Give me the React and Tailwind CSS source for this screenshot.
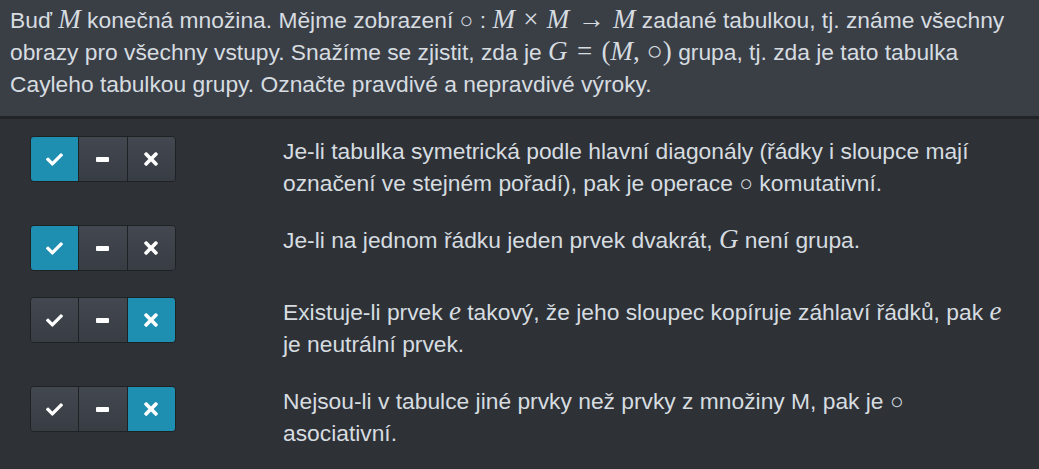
import React, { useState } from 'react';
import { FaCheck, FaTimes } from 'react-icons/fa';

const M = ({ children }) => (
  <span className="italic text-[27px] leading-none" style={{ fontFamily: '"Liberation Serif", "DejaVu Serif", serif' }}>
    {children}
  </span>
);

const R = ({ children, className = '' }) => (
  <span className={'text-[27px] leading-none ' + className} style={{ fontFamily: '"Liberation Serif", "DejaVu Serif", serif' }}>
    {children}
  </span>
);

const statements = [
  {
    answer: 'yes',
    text: (
      <>Je-li tabulka symetrická podle hlavní diagonály (řádky i sloupce mají označení ve stejném pořadí), pak je operace ○ komutativní.</>
    ),
  },
  {
    answer: 'yes',
    text: (
      <>Je-li na jednom řádku jeden prvek dvakrát, <M>G</M> není grupa.</>
    ),
  },
  {
    answer: 'no',
    text: (
      <>Existuje-li prvek <M>e</M> takový, že jeho sloupec kopíruje záhlaví řádků, pak <M>e</M> je neutrální prvek.</>
    ),
  },
  {
    answer: 'no',
    text: <>Nejsou-li v tabulce jiné prvky než prvky z množiny M, pak je ○ asociativní.</>,
  },
];

const Toggle = ({ value, onChange }) => {
  const options = [
    { key: 'yes', icon: <FaCheck size={17} /> },
    { key: 'skip', icon: <span className="block h-[5px] w-[13px] rounded-[1px] bg-white" /> },
    { key: 'no', icon: <FaTimes size={20} /> },
  ];
  return (
    <div className="flex h-[46px] w-[146px] shrink-0 overflow-hidden rounded-[4px] border border-[#1f2225]">
      {options.map((o, i) => (
        <button
          key={o.key}
          onClick={() => onChange(o.key)}
          className={
            'flex flex-1 items-center justify-center text-white ' +
            (i > 0 ? 'border-l border-[#1f2225] ' : '') +
            (value === o.key ? 'bg-[#1f8fb1]' : 'bg-gradient-to-b from-[#43474f] to-[#383c43]')
          }
        >
          {o.icon}
        </button>
      ))}
    </div>
  );
};

export default function App() {
  const [answers, setAnswers] = useState(statements.map((s) => s.answer));

  return (
    <div
      className="min-h-[469px] w-full bg-[#2e3236] text-[22.8px] leading-[32px] text-[#d6dce0]"
      style={{ fontFamily: '"Liberation Sans", Arial, sans-serif' }}
    >
      <div className="border-b-[3px] border-[#222528] bg-[#3a3f46] px-[10px] pt-[4px] pb-[16px]">
        Buď <M>M</M> konečná množina. Mějme zobrazení ○ : <M>M</M> <R className="mx-[2px]">×</R> <M>M</M>{' '}
        <R className="mx-[2px]">→</R> <M>M</M> zadané tabulkou, tj. známe všechny obrazy pro všechny vstupy. Snažíme
        se zjistit, zda je <M>G</M> <R className="mx-[3px]">=</R> <R>(</R><M>M</M><R>, ○)</R> grupa, tj. zda je tato
        tabulka Cayleho tabulkou grupy. Označte pravdivé a nepravdivé výroky.
      </div>

      <div className="flex flex-col gap-[26px] pt-[17px] pb-[20px]">
        {statements.map((s, i) => (
          <div key={i} className="flex items-start">
            <div className="w-[283px] shrink-0 pl-[30px]">
              <Toggle
                value={answers[i]}
                onChange={(v) => setAnswers((prev) => prev.map((a, j) => (j === i ? v : a)))}
              />
            </div>
            <div className="-mt-[1px] pr-[22px]">{s.text}</div>
          </div>
        ))}
      </div>
    </div>
  );
}
